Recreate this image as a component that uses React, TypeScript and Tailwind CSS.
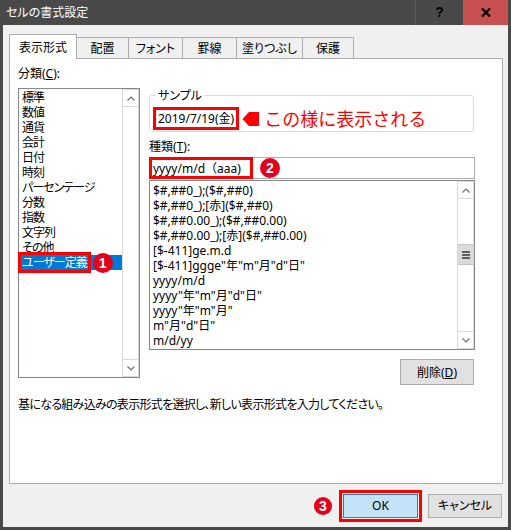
const tabs = [
  { label: '表示形式', w: 'w-[68px]' },
  { label: '配置', w: 'w-[52px]' },
  { label: 'フォント', w: 'w-[54px]' },
  { label: '罫線', w: 'w-[54px]' },
  { label: '塗りつぶし', w: 'w-[66px]' },
  { label: '保護', w: 'w-[51px]' },
];

const categories = ['標準', '数値', '通貨', '会計', '日付', '時刻', 'パーセンテージ', '分数', '指数', '文字列', 'その他'];

const formats = [
  '$#,##0_);($#,##0)',
  '$#,##0_);[赤]($#,##0)',
  '$#,##0.00_);($#,##0.00)',
  '$#,##0.00_);[赤]($#,##0.00)',
  '[$-411]ge.m.d',
  '[$-411]ggge"年"m"月"d"日"',
  'yyyy/m/d',
  'yyyy"年"m"月"d"日"',
  'yyyy"年"m"月"',
  'm"月"d"日"',
  'm/d/yy',
];

function Chevron({ down }: { down?: boolean }) {
  return (
    <svg width="8" height="5" viewBox="0 0 8 5">
      <polyline
        points={down ? '0.5,0.5 4,4 7.5,0.5' : '0.5,4.5 4,1 7.5,4.5'}
        fill="none"
        stroke="#6d6d6d"
        strokeWidth="1.2"
      />
    </svg>
  );
}

function Scrollbar({ thumb }: { thumb?: boolean }) {
  return (
    <div className="w-[17px] shrink-0 flex flex-col border border-[#d9d9d9] bg-white">
      <div className="h-[17px] border-b border-[#d9d9d9] flex items-center justify-center">
        <Chevron />
      </div>
      {thumb && (
        <div className="mt-[45px] h-[21px] bg-[#dadada] border-y border-[#c4c4c4] flex flex-col items-center justify-center gap-[1px]">
          <div className="w-[8px] h-[2px] bg-[#5f5f5f]" />
          <div className="w-[8px] h-[2px] bg-[#5f5f5f]" />
          <div className="w-[8px] h-[2px] bg-[#5f5f5f]" />
        </div>
      )}
      <div className="flex-1" />
      <div className="h-[17px] border-t border-[#d9d9d9] flex items-center justify-center">
        <Chevron down />
      </div>
    </div>
  );
}

function Badge({ n, size }: { n: number; size: string }) {
  return (
    <div
      className={`${size} shrink-0 rounded-full bg-[#e5001c] text-white font-bold flex items-center justify-center text-[14px] leading-none font-['Liberation_Sans',sans-serif]`}
    >
      {n}
    </div>
  );
}

export default function App() {
  return (
    <div className="w-[511px] h-[530px] bg-[#494949] flex flex-col text-[12px] leading-[15px] text-black font-['Noto_Sans','Noto_Sans_CJK_JP',sans-serif] [font-feature-settings:'palt']">
      {/* タイトルバー */}
      <div className="h-[25px] flex mr-[3px]">
        <div className="flex-1 flex items-center pl-[6px] text-white text-[12px]">セルの書式設定</div>
        <div className="w-[48px] border-l border-[#5c5c5c] flex items-center justify-center text-black font-bold text-[14px] font-['Liberation_Sans',sans-serif]">
          ?
        </div>
        <div className="w-[45px] bg-[#c75050] flex items-center justify-center">
          <svg width="10" height="9" viewBox="0 0 10 9">
            <path d="M1 0.5 L9 8.5 M9 0.5 L1 8.5" stroke="#000" strokeWidth="2.2" />
          </svg>
        </div>
      </div>

      {/* 本体 */}
      <div className="flex-1 mx-[3px] mb-[3px] bg-[#f0f0f0] flex flex-col pt-[9px]">
        {/* タブ */}
        <div className="h-[24px] flex items-end pl-[6px]">
          {tabs.map((t, i) =>
            i === 0 ? (
              <div
                key={t.label}
                className={`${t.w} h-[25px] -mb-[1px] relative z-10 bg-white border border-b-0 border-[#adadad] flex items-center justify-center`}
              >
                {t.label}
              </div>
            ) : (
              <div
                key={t.label}
                className={`${t.w} h-[21px] bg-[#f0f0f0] border-t border-r border-[#adadad] flex items-center justify-center`}
              >
                {t.label}
              </div>
            )
          )}
        </div>

        {/* パネル */}
        <div className="ml-[6px] mr-[5px] h-[426px] bg-white border border-[#adadad] pl-[8px] pt-[7px] flex flex-col">
          <div className="flex items-start">
            {/* 分類 */}
            <div className="w-[122px] flex flex-col">
              <div>
                分類(<span className="underline">C</span>):
              </div>
              <div className="mt-[7px] h-[290px] border border-[#828790] flex">
                <div className="flex-1 pt-[1px]">
                  {categories.map((c) => (
                    <div key={c} className="h-[15px] pl-[3px] whitespace-nowrap tracking-[-1px]">
                      {c}
                    </div>
                  ))}
                  <div className="h-[15px] bg-[#0078d7] flex items-center">
                    <div className="-ml-[1px] h-[21px] flex items-center border-[3px] border-[#ff0000] pl-[1px] pr-[1px] text-white whitespace-nowrap tracking-[-1px]">
                      ユーザー定義
                    </div>
                    <div className="ml-[2px]">
                      <Badge n={1} size="w-[20px] h-[20px]" />
                    </div>
                  </div>
                </div>
                <Scrollbar />
              </div>
            </div>

            {/* 右側 */}
            <div className="ml-[9px] w-[326px] flex flex-col">
              <fieldset className="mt-[22px] mr-[1px] border border-[#dcdcdc] rounded-[3px] px-[3px] pb-[1px]">
                <legend className="ml-[3px] px-[2px] leading-[15px]">サンプル</legend>
                <div className="mt-[4px] flex items-center">
                  <div className="h-[23px] flex items-center border-[3px] border-[#ff0000] px-[2px] whitespace-nowrap">
                    2019/7/19(金)
                  </div>
                  <svg className="ml-[3px]" width="17" height="14" viewBox="0 0 17 14">
                    <path d="M7 0 H17 V14 H7 L0.5 7 Z" fill="#ff0000" />
                  </svg>
                  <div className="ml-[5px] text-[18px] leading-[22px] text-[#ff0000] whitespace-nowrap [font-feature-settings:normal]">
                    この様に表示される
                  </div>
                </div>
              </fieldset>

              <div className="mt-[7px]">
                種類(<span className="underline">T</span>):
              </div>
              <div className="mt-[3px] h-[22px] border border-[#adadad] flex items-center">
                <div className="-ml-[1px] h-[22px] w-[104px] flex items-center border-[3px] border-[#ff0000] pl-[1px] whitespace-nowrap [font-feature-settings:normal]">
                  yyyy/m/d（aaa)
                </div>
                <div className="ml-[7px]">
                  <Badge n={2} size="w-[20px] h-[20px]" />
                </div>
              </div>

              <div className="mt-[1px] h-[170px] border border-[#828790] flex">
                <div className="flex-1 pt-[2px] pl-[3px]">
                  {formats.map((f) => (
                    <div key={f} className="h-[15px] whitespace-nowrap">
                      {f}
                    </div>
                  ))}
                </div>
                <Scrollbar thumb />
              </div>

              <div className="mt-[9px] flex justify-end mr-[1px]">
                <div className="w-[74px] h-[26px] bg-[#e1e1e1] border border-[#adadad] flex items-center justify-center">
                  削除(<span className="underline">D</span>)
                </div>
              </div>
            </div>
          </div>

          <p className="mt-[12px] tracking-[-0.7px] whitespace-nowrap">
            基になる組み込みの表示形式を選択し、新しい表示形式を入力してください。
          </p>
        </div>

        {/* ボタン */}
        <div className="flex-1 flex items-center justify-end pr-[6px]">
          <Badge n={3} size="w-[18px] h-[18px]" />
          <div className="ml-[7px] border-[3px] border-[#ff0000] p-[1px]">
            <div className="w-[75px] h-[24px] bg-[#c4e3f9] border border-[#3a79b3] flex items-center justify-center">
              OK
            </div>
          </div>
          <div className="ml-[6px] w-[74px] h-[24px] bg-[#e1e1e1] border border-[#adadad] flex items-center justify-center">
            キャンセル
          </div>
        </div>
      </div>
    </div>
  );
}
